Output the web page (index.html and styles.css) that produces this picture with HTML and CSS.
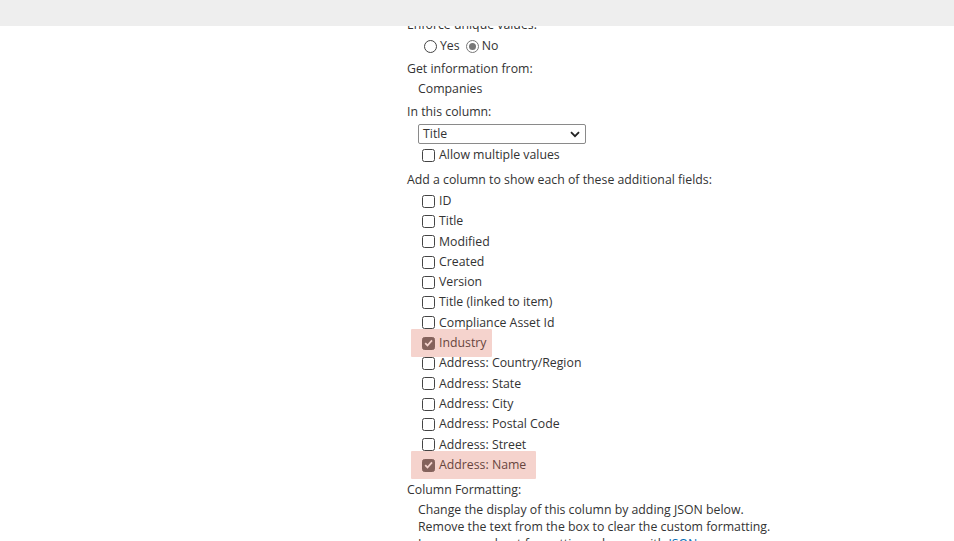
FILE: index.html
```html
<!DOCTYPE html>
<html>
<head>
<meta charset="utf-8">
<link rel="stylesheet" href="styles.css">
</head>
<body>
<div class="topbar"></div>
<div class="form">
  <div class="label r-enforce">Enforce unique values:</div>
  <div class="radios">
    <span class="radio"></span><span class="rlabel">Yes</span>
    <span class="radio on"></span><span class="rlabel">No</span>
  </div>
  <div class="label r-get">Get information from:</div>
  <div class="value">Companies</div>
  <div class="label r-col">In this column:</div>
  <div class="select"><span>Title</span>
    <svg class="chev" width="10" height="7" viewBox="0 0 10 7"><path d="M1 1.2 L5 5.2 L9 1.2" fill="none" stroke="#222" stroke-width="1.8"/></svg>
  </div>
  <div class="cbrow multi"><span class="cb"></span>Allow multiple values</div>
  <div class="label r-add">Add a column to show each of these additional fields:</div>
  <div class="fields">
    <div class="cbrow"><span class="cb"></span>ID</div>
    <div class="cbrow"><span class="cb"></span>Title</div>
    <div class="cbrow"><span class="cb"></span>Modified</div>
    <div class="cbrow"><span class="cb"></span>Created</div>
    <div class="cbrow"><span class="cb"></span>Version</div>
    <div class="cbrow"><span class="cb"></span>Title (linked to item)</div>
    <div class="cbrow"><span class="cb"></span>Compliance Asset Id</div>
    <div class="cbrow hl hl-industry"><span class="cb on"><svg width="12" height="12" viewBox="0 0 12 12"><path d="M2.4 6.2 L4.9 8.7 L9.8 3.2" fill="none" stroke="#fff" stroke-width="1.9"/></svg></span>Industry</div>
    <div class="cbrow"><span class="cb"></span>Address: Country/Region</div>
    <div class="cbrow"><span class="cb"></span>Address: State</div>
    <div class="cbrow"><span class="cb"></span>Address: City</div>
    <div class="cbrow"><span class="cb"></span>Address: Postal Code</div>
    <div class="cbrow"><span class="cb"></span>Address: Street</div>
    <div class="cbrow hl hl-name"><span class="cb on"><svg width="12" height="12" viewBox="0 0 12 12"><path d="M2.4 6.2 L4.9 8.7 L9.8 3.2" fill="none" stroke="#fff" stroke-width="1.9"/></svg></span>Address: Name</div>
  </div>
  <div class="label r-fmt">Column Formatting:</div>
  <div class="desc">
    <div>Change the display of this column by adding JSON below.</div>
    <div>Remove the text from the box to clear the custom formatting.</div>
    <div>Learn more about formatting columns with <a class="link">JSON</a>.</div>
  </div>
</div>
</body>
</html>
```

FILE: styles.css
```css
html, body {
  margin: 0;
  padding: 0;
  background: #ffffff;
  height: 541px;
  overflow: hidden;
}
body {
  font-family: "Open Sans", "Noto Sans", "Liberation Sans", sans-serif;
  font-size: 12.3px;
  color: #333333;
}
.topbar {
  position: fixed;
  top: 0;
  left: 0;
  right: 0;
  height: 26px;
  background: #eeeeee;
  z-index: 5;
}
.form {
  margin-left: 407px;
  padding-top: 15px;
  display: flex;
  flex-direction: column;
}
.label, .value, .cbrow, .radios {
  height: 20px;
  line-height: 20px;
  white-space: nowrap;
}
.radios {
  margin-top: 1px;
  padding-left: 17px;
  display: flex;
  align-items: center;
}
.radio {
  width: 11px;
  height: 11px;
  border: 1px solid #444;
  border-radius: 50%;
  box-sizing: content-box;
  position: relative;
}
.radio.on {
  border-color: #777;
}
.radio.on::after {
  content: "";
  position: absolute;
  left: 2px;
  top: 2px;
  width: 7px;
  height: 7px;
  border-radius: 50%;
  background: #777;
}
.rlabel {
  margin-left: 3px;
  margin-right: 6px;
}
.r-get { margin-top: 3px; }
.value { padding-left: 11px; }
.r-col { margin-top: 3px; }
.select {
  margin-top: 2px;
  margin-left: 11px;
  width: 168px;
  height: 20px;
  box-sizing: border-box;
  border: 1px solid #8a8a8a;
  border-radius: 2px;
  display: flex;
  align-items: center;
  justify-content: space-between;
  padding: 0 5px 0 4px;
  line-height: 18px;
}
.chev { margin-top: 1px; }
.cbrow {
  display: flex;
  align-items: center;
  padding-left: 15px;
  position: relative;
}
.multi { margin-top: 1px; }
.cb {
  width: 11px;
  height: 11px;
  border: 1px solid #444;
  border-radius: 2.5px;
  margin-right: 4px;
  box-sizing: content-box;
  flex: none;
  display: flex;
  align-items: center;
  justify-content: center;
}
.cb.on {
  background: #5e5e5e;
  border-color: #5e5e5e;
}
.cb svg { display: block; }
.r-add { margin-top: 5px; }
.fields {
  margin-top: 1px;
  display: flex;
  flex-direction: column;
}
.fields .cbrow { height: 20.3px; line-height: 20.3px; }
.hl::before {
  content: "";
  position: absolute;
  left: 4px;
  top: -4px;
  bottom: -4px;
  background: rgba(222, 110, 90, 0.3);
  border-radius: 1px;
}
.hl-industry::before { width: 81px; }
.hl-name::before { width: 125px; }
.r-fmt { margin-top: 5px; }
.desc {
  margin-top: 1px;
  padding-left: 11px;
  line-height: 17px;
  white-space: nowrap;
}
.link { color: #0a6fb8; text-decoration: none; }
```
